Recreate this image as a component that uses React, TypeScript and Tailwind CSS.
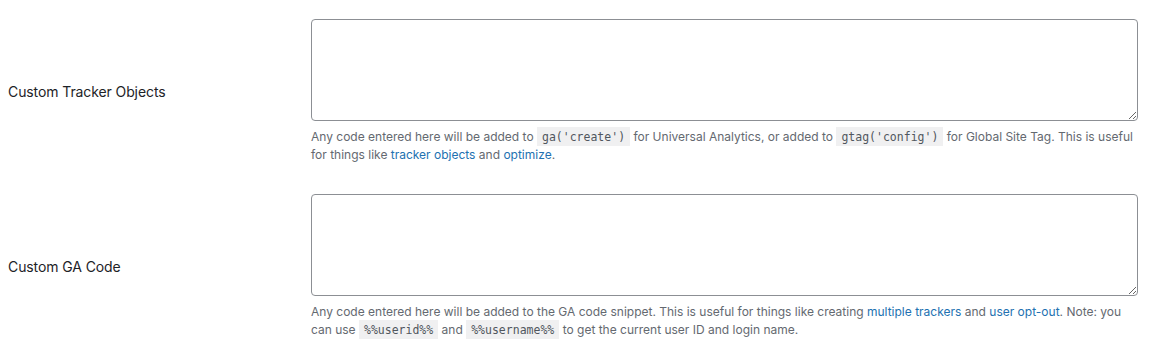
const Code = ({ children }: { children: string }) => (
  <code className="bg-[#f0f0f1] px-[5px] pt-[3px] pb-[2px] text-[11.5px] font-['DejaVu_Sans_Mono',monospace] text-[#50575e]">
    {children}
  </code>
);

const Link = ({ children }: { children: string }) => (
  <a href="#" className="text-[#2271b1]">
    {children}
  </a>
);

const Row = ({ label, children, first }: { label: string; children: React.ReactNode; first?: boolean }) => (
  <div className={`flex items-center ${first ? "pt-[19px]" : "pt-[30px]"}`}>
    <div className="w-[311px] shrink-0 pl-2 text-[14px] tracking-[-0.1px] text-[#1d2327]">{label}</div>
    <div className="flex-1 pr-[15px]">
      <textarea className="block h-[102px] w-full rounded-[4px] border border-[#8c8f94] bg-white" />
      <p className="mt-[7px] text-[12px] leading-[18px] text-[#646970]">{children}</p>
    </div>
  </div>
);

export default function App() {
  return (
    <div className="h-[353px] w-[1153px] overflow-hidden bg-white font-['Inter',sans-serif]">
      <Row label="Custom Tracker Objects" first>
        Any code entered here will be added to <Code>ga('create')</Code> for Universal Analytics, or added to{" "}
        <Code>gtag('config')</Code> for Global Site Tag. This is useful for things like <Link>tracker objects</Link>{" "}
        and <Link>optimize</Link>.
      </Row>
      <Row label="Custom GA Code">
        Any code entered here will be added to the GA code snippet. This is useful for things like creating{" "}
        <Link>multiple trackers</Link> and <Link>user opt-out</Link>. Note: you can use <Code>%%userid%%</Code> and{" "}
        <Code>%%username%%</Code> to get the current user ID and login name.
      </Row>
    </div>
  );
}
